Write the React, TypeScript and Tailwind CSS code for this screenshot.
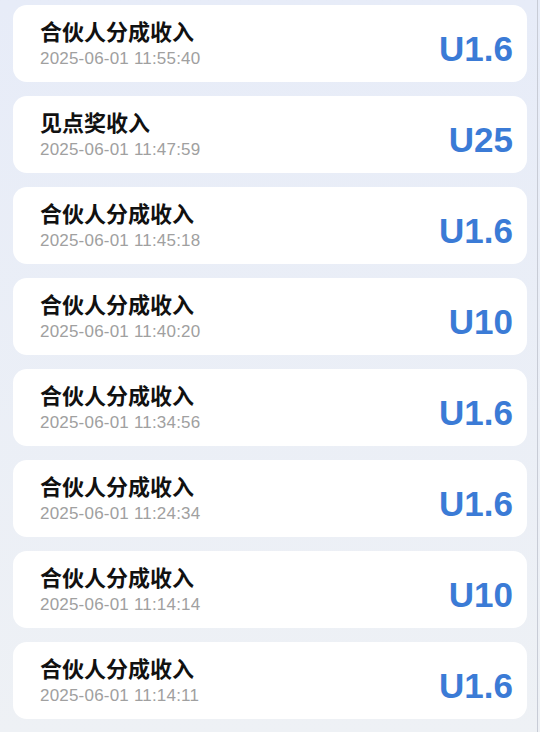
import React from "react";

const items = [
  { title: "合伙人分成收入", time: "2025-06-01 11:55:40", amount: "U1.6" },
  { title: "见点奖收入", time: "2025-06-01 11:47:59", amount: "U25" },
  { title: "合伙人分成收入", time: "2025-06-01 11:45:18", amount: "U1.6" },
  { title: "合伙人分成收入", time: "2025-06-01 11:40:20", amount: "U10" },
  { title: "合伙人分成收入", time: "2025-06-01 11:34:56", amount: "U1.6" },
  { title: "合伙人分成收入", time: "2025-06-01 11:24:34", amount: "U1.6" },
  { title: "合伙人分成收入", time: "2025-06-01 11:14:14", amount: "U10" },
  { title: "合伙人分成收入", time: "2025-06-01 11:14:11", amount: "U1.6" },
];

export default function App() {
  return (
    <div className="flex w-[540px] h-[732px] overflow-hidden bg-gradient-to-b from-[#e7ecf8] to-[#eef1f5] [font-family:'Liberation_Sans','Noto_Sans_CJK_SC',sans-serif]">
      <div className="flex-1 flex flex-col gap-[14px] pt-[5px] pl-[13px] pr-[10px]">
        {items.map((it, i) => (
          <div
            key={i}
            className="h-[77px] shrink-0 bg-white rounded-[14px] flex justify-between items-start pl-[27px] pr-[14px]"
          >
            <div className="flex flex-col pt-[12px]">
              <div className="text-[22px] leading-[26px] font-bold text-[#111111] [font-family:'Noto_Sans_CJK_SC',sans-serif]">
                {it.title}
              </div>
              <div className="mt-[6px] text-[17px] leading-[20px] tracking-[0.2px] text-[#a0a0a0]">
                {it.time}
              </div>
            </div>
            <div className="pt-[26px] text-[35px] leading-[35px] font-bold text-[#3b7bd6]">
              {it.amount}
            </div>
          </div>
        ))}
      </div>
      <div className="w-px h-full bg-[#c8ccd6]" />
      <div className="w-[2px] h-full" />
    </div>
  );
}
